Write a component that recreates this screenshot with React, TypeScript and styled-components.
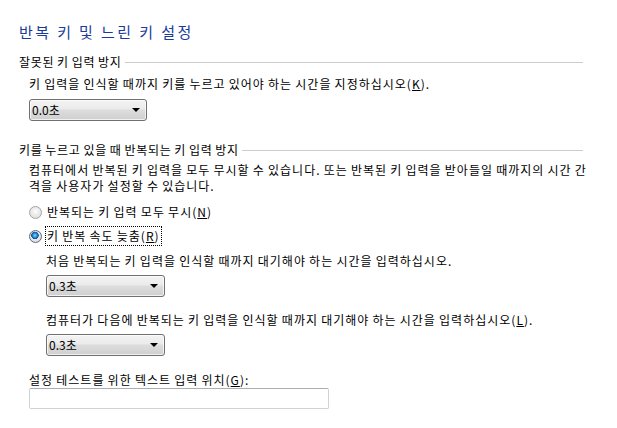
import styled, { createGlobalStyle } from "styled-components";

const GlobalStyle = createGlobalStyle`
  html, body {
    margin: 0;
    padding: 0;
    background: #ffffff;
  }
  body {
    font-family: "Noto Sans CJK KR", "Noto Sans", sans-serif;
    font-size: 12px;
    color: #000000;
    letter-spacing: 1px;
    word-spacing: -0.5px;
  }
`;

const Page = styled.div`
  width: 617px;
  height: 428px;
  box-sizing: border-box;
  padding: 22px 34px 0 19px;
  overflow: hidden;
`;

const Title = styled.h1`
  margin: 0;
  font-size: 15px;
  font-weight: normal;
  line-height: 20px;
  color: #1a3b9c;
  letter-spacing: 2.4px;
  word-spacing: 0;
`;

const Group = styled.section<{ $top: number }>`
  margin-top: ${(p) => p.$top}px;
`;

const GroupHeader = styled.div`
  display: flex;
  align-items: center;
  gap: 3px;
  line-height: 16px;
  letter-spacing: 0.7px;

  &::after {
    content: "";
    flex: 1;
    height: 1px;
    background: #cccccc;
  }
`;

const Body = styled.div<{ $indent?: number }>`
  padding-left: ${(p) => p.$indent ?? 10}px;
  display: flex;
  flex-direction: column;
  align-items: flex-start;
`;

const Text = styled.p<{ $top: number }>`
  margin: ${(p) => p.$top}px 0 0;
  line-height: 16px;
  white-space: nowrap;
`;

const Key = styled.span`
  text-decoration: underline;
`;

const Select = styled.div<{ $top: number; $width: number }>`
  margin-top: ${(p) => p.$top}px;
  width: ${(p) => p.$width}px;
  height: 22px;
  box-sizing: border-box;
  border: 1px solid #707070;
  border-radius: 3px;
  background: linear-gradient(#f3f3f3 0%, #ebebeb 45%, #dddddd 50%, #cfcfcf 100%);
  box-shadow: inset 0 0 0 1px rgba(255, 255, 255, 0.7);
  display: flex;
  align-items: center;
  justify-content: space-between;
  padding: 0 6px 0 2px;
  line-height: 16px;
  letter-spacing: 0;
`;

const Arrow = styled.span`
  width: 0;
  height: 0;
  border-left: 4px solid transparent;
  border-right: 4px solid transparent;
  border-top: 4px solid #000000;
`;

const RadioRow = styled.label<{ $top: number }>`
  margin-top: ${(p) => p.$top}px;
  display: flex;
  align-items: center;
  gap: 3px;
  line-height: 16px;
`;

const RadioDot = styled.span<{ $checked?: boolean }>`
  width: 11px;
  height: 11px;
  border-radius: 50%;
  border: 1px solid ${(p) => (p.$checked ? "#5a6a7e" : "#a4a4a4")};
  background: ${(p) =>
    p.$checked
      ? "radial-gradient(circle at 45% 40%, #8fd4ff 0, #2a8fd8 2px, #0b4f9a 3.5px, #e9e9e9 4px, #d4d4d4 100%)"
      : "radial-gradient(circle at 50% 40%, #ffffff 0, #eeeeee 3px, #d9d9d9 100%)"};
  flex: none;
`;

const RadioLabel = styled.span<{ $focused?: boolean }>`
  padding: 1px 1px;
  border: 1px dotted ${(p) => (p.$focused ? "#000000" : "transparent")};
`;

const TextInput = styled.input`
  display: block;
  width: 300px;
  height: 21px;
  box-sizing: border-box;
  margin-left: 10px;
  border: 1px solid #cfd3d8;
  border-top-color: #abadb3;
  border-radius: 2px;
  outline: none;
  font: inherit;
`;

export default function App() {
  return (
    <>
      <GlobalStyle />
      <Page>
        <Title>반복 키 및 느린 키 설정</Title>

        <Group $top={12}>
          <GroupHeader>잘못된 키 입력 방지</GroupHeader>
          <Body>
            <Text $top={6}>
              키 입력을 인식할 때까지 키를 누르고 있어야 하는 시간을 지정하십시오(<Key>K</Key>).
            </Text>
            <Select $top={7} $width={118}>
              0.0초
              <Arrow />
            </Select>
          </Body>
        </Group>

        <Group $top={21}>
          <GroupHeader>키를 누르고 있을 때 반복되는 키 입력 방지</GroupHeader>
          <Body>
            <Text $top={4}>
              컴퓨터에서 반복된 키 입력을 모두 무시할 수 있습니다. 또는 반복된 키 입력을 받아들일 때까지의 시간 간
              <br />
              격을 사용자가 설정할 수 있습니다.
            </Text>
            <RadioRow $top={8}>
              <RadioDot />
              <RadioLabel>
                반복되는 키 입력 모두 무시(<Key>N</Key>)
              </RadioLabel>
            </RadioRow>
            <RadioRow $top={4}>
              <RadioDot $checked />
              <RadioLabel $focused>
                키 반복 속도 늦춤(<Key>R</Key>)
              </RadioLabel>
            </RadioRow>
            <Body $indent={17}>
              <Text $top={7}>처음 반복되는 키 입력을 인식할 때까지 대기해야 하는 시간을 입력하십시오.</Text>
              <Select $top={6} $width={119}>
                0.3초
                <Arrow />
              </Select>
              <Text $top={15}>
                컴퓨터가 다음에 반복되는 키 입력을 인식할 때까지 대기해야 하는 시간을 입력하십시오(<Key>L</Key>).
              </Text>
              <Select $top={6} $width={119}>
                0.3초
                <Arrow />
              </Select>
            </Body>
          </Body>
        </Group>

        <Body>
          <Text $top={16}>
            설정 테스트를 위한 텍스트 입력 위치(<Key>G</Key>):
          </Text>
        </Body>
        <TextInput />
      </Page>
    </>
  );
}
